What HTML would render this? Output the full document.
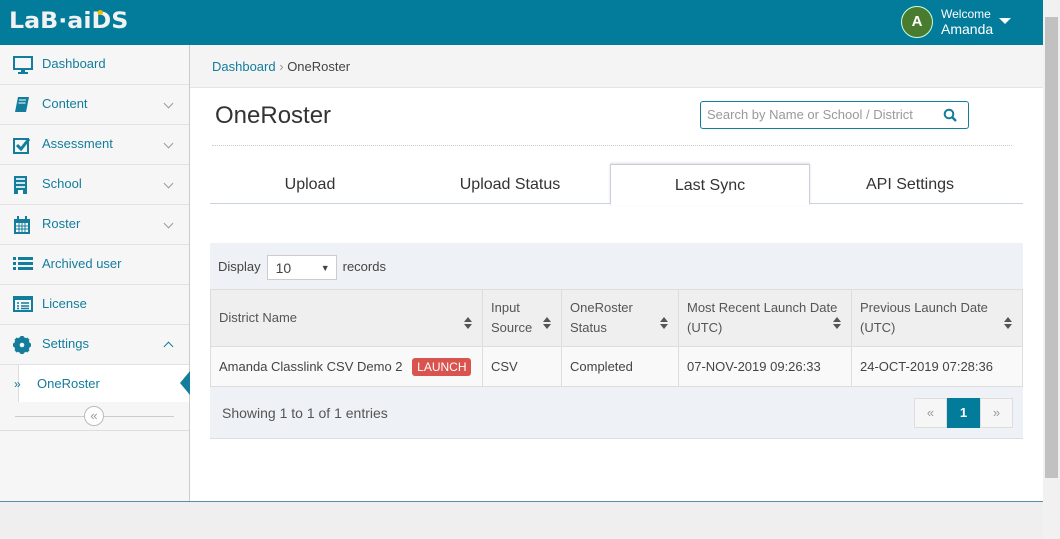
<!DOCTYPE html>
<html><head><style>
*{box-sizing:border-box;margin:0;padding:0}
body{width:1060px;height:539px;overflow:hidden;font-family:"Liberation Sans",sans-serif;background:#fff;position:relative;color:#555}
.hdr{position:absolute;left:0;top:0;width:1043px;height:45px;background:#037c9c}
.logo{position:absolute;left:9px;top:9px;color:#f2f2f2;font:900 22px "DejaVu Sans",sans-serif;letter-spacing:0px;transform:scaleX(1.08);transform-origin:left}
.logo i{position:absolute;left:82px;top:1px;width:5px;height:5px;border-radius:50%;background:#f5b800}
.av{position:absolute;left:901px;top:6px;width:32px;height:32px;border-radius:50%;background:#4a7c2f;border:1px solid #cfd;color:#fff;font:bold 15px "Liberation Sans";text-align:center;line-height:30px}
.wel{position:absolute;left:941px;top:7px;color:#fff;font-size:12px;line-height:15px}
.wel b{font-size:14px;font-weight:normal;display:block}
.caret{position:absolute;left:999px;top:18px;border:6px solid transparent;border-top:6px solid #fff}
.sb{position:absolute;left:0;top:45px;width:190px;height:456px;background:#f6f6f6;border-right:1px solid #ccc}
.it{height:40px;border-bottom:1px solid #e2e2e2;position:relative;color:#137d9c;font-size:13px;line-height:38px;padding-left:42px}
.it svg{position:absolute;left:13px;top:11px}
.it .ch{position:absolute;left:165px;top:15px;width:7px;height:7px;border-right:1.5px solid #999;border-bottom:1.5px solid #999;transform:rotate(45deg)}
.it .up{top:18px;transform:rotate(-135deg);border-color:#137d9c}
.sub{height:37px;background:#fff;position:relative;color:#137d9c;font-size:13px;line-height:37px;border-left:1px solid #ddd;margin-left:18px;padding-left:18px}
.sub:before{content:"»";position:absolute;left:-5px;top:1px;font-size:12px}
.sub:after{content:"";position:absolute;right:-1px;top:6px;border:12px solid transparent;border-right:10px solid #137d9c;border-left:0}
.col{height:29px;border-bottom:1px solid #ddd;position:relative}
.col:before{content:"";position:absolute;left:15px;right:15px;top:14px;border-top:1px solid #ccc}
.col span{position:absolute;left:84px;top:4px;width:20px;height:20px;border-radius:50%;border:1px solid #bbb;background:#fff;color:#999;font-size:13px;text-align:center;line-height:17px}
.bc{position:absolute;left:190px;top:45px;width:853px;height:43px;background:#f4f4f4;border-bottom:1px solid #e5e5e5;font-size:13px;line-height:44px;padding-left:22px;color:#444}
.bc a{color:#137d9c}
h1{position:absolute;left:215px;top:102px;font-weight:normal;font-size:24px;color:#333}
.srch{position:absolute;left:700px;top:101px;width:269px;height:28px;border:1px solid #137d9c;border-radius:3px;font-size:13px;color:#999;line-height:26px;padding-left:6px}
.dots{position:absolute;left:212px;top:145px;width:800px;border-top:1px dotted #ccc}
.tabs{position:absolute;left:210px;top:164px;width:813px;height:40px;border-bottom:1px solid #c8d3dd}
.tab{position:absolute;top:0;width:200px;height:40px;text-align:center;line-height:42px;font-size:16px;color:#333}
.tab.a{background:#fff;border:1px solid #ccd;border-bottom:1px solid #fff;box-shadow:0 -1px 2px #ddd;height:41px}
.panel{position:absolute;left:210px;top:243px;width:813px;height:196px;background:#eef1f5;border-bottom:1px solid #ddd}
.disp{position:absolute;left:8px;top:12px;font-size:13px;color:#444;line-height:24px}
.sel{display:inline-block;width:70px;height:25px;border:1px solid #ccc;background:#fff;vertical-align:middle;margin:0 6px;padding-left:8px;position:relative;font-size:14px}
.sel:after{content:"▼";position:absolute;right:6px;top:0;font-size:9px}
table{position:absolute;left:0;top:46px;width:813px;border-collapse:collapse;font-size:13px}
th{background:#efefef;font-weight:normal;text-align:left;color:#555;border:1px solid #ddd;height:57px;padding:0 8px;line-height:20px;position:relative;vertical-align:middle}
th:after{content:"";position:absolute;right:10px;top:27px;border:4.5px solid transparent;border-bottom:5px solid #555;border-top:0;}
th:before{content:"";position:absolute;right:10px;top:34px;border:4.5px solid transparent;border-top:5px solid #555;border-bottom:0}
td{background:#f9f9f9;border:1px solid #ddd;height:40px;padding:0 8px;color:#444}
.lb{display:inline-block;background:#d9534f;color:#fff;font-size:12px;padding:2px 5px;border-radius:3px;margin-left:6px}
.show{position:absolute;left:12px;top:162px;font-size:14px;color:#555}
.pg{position:absolute;left:704px;top:155px;display:flex}
.pg div{width:33px;height:30px;border:1px solid #ddd;background:#f6f6f6;text-align:center;line-height:28px;color:#999;font-size:13px}
.pg .c{background:#037c9c;color:#fff;border-color:#037c9c;font-weight:bold}
.foot{position:absolute;left:0;top:501px;width:1043px;height:38px;background:#efefef;border-top:1px solid #5b8fa5}
.scr{position:absolute;left:1043px;top:0;width:17px;height:539px;background:#f1f1f1}
.scr i{position:absolute;left:2px;top:17px;width:13px;height:461px;background:#c1c1c1}
</style></head><body>
<div class="hdr"><div class="logo">LaB·aiDS<i></i></div>
<div class="av">A</div><div class="wel">Welcome<b>Amanda</b></div><div class="caret"></div></div>
<div class="sb">
<div class="it"><svg width="20" height="18" viewBox="0 0 20 18"><rect x="1" y="1" width="18" height="12" fill="none" stroke="#137d9c" stroke-width="2"/><rect x="8" y="13" width="4" height="3" fill="#137d9c"/><rect x="5" y="16" width="10" height="2" fill="#137d9c"/></svg>Dashboard</div>
<div class="it"><svg width="18" height="18" viewBox="0 0 18 18"><path d="M5 1h11l-3 15H2z" fill="#137d9c"/><path d="M6 4h7M5.5 7h7" stroke="#fff"/></svg>Content<i class="ch"></i></div>
<div class="it"><svg width="18" height="18" viewBox="0 0 18 18"><rect x="1" y="3" width="14" height="14" fill="none" stroke="#137d9c" stroke-width="2"/><path d="M4 9l4 4 8-10" fill="none" stroke="#137d9c" stroke-width="3"/></svg>Assessment<i class="ch"></i></div>
<div class="it"><svg width="16" height="18" viewBox="0 0 16 18"><rect x="1" y="0" width="13" height="18" fill="#137d9c"/><path d="M3 2h9v2H3zM3 6h9v2H3zM3 10h9v2H3z" fill="#cfe5ee"/><rect x="5" y="14" width="5" height="4" fill="#fff"/></svg>School<i class="ch"></i></div>
<div class="it"><svg width="18" height="18" viewBox="0 0 18 18"><rect x="1" y="3" width="16" height="15" fill="#137d9c"/><path d="M3 7h12v9H3z" fill="#fff"/><path d="M6 7v9M9 7v9M12 7v9M3 10h12M3 13h12" stroke="#137d9c"/><rect x="4" y="0" width="2" height="5" fill="#137d9c"/><rect x="12" y="0" width="2" height="5" fill="#137d9c"/></svg>Roster<i class="ch"></i></div>
<div class="it"><svg width="20" height="16" viewBox="0 0 20 16"><path d="M0 1h3v3H0zM5 1h15v3H5zM0 6h3v3H0zM5 6h15v3H5zM0 11h3v3H0zM5 11h15v3H5z" fill="#137d9c"/></svg>Archived user</div>
<div class="it"><svg width="20" height="16" viewBox="0 0 20 16"><rect x="1" y="1" width="18" height="14" fill="none" stroke="#137d9c" stroke-width="2"/><path d="M1 1h18v3H1z" fill="#137d9c"/><path d="M4 7h2M8 7h8M4 10h2M8 10h8M4 12.5h2M8 12.5h8" stroke="#137d9c" stroke-width="1.4"/></svg>License</div>
<div class="it"><svg width="18" height="18" viewBox="0 0 18 18"><circle cx="9" cy="9" r="6" fill="none" stroke="#137d9c" stroke-width="4"/><path d="M9 0v18M0 9h18M2.6 2.6l12.8 12.8M15.4 2.6L2.6 15.4" stroke="#137d9c" stroke-width="3.5"/><circle cx="9" cy="9" r="2.3" fill="#f6f6f6"/></svg>Settings<i class="ch up"></i></div>
<div class="sub">OneRoster</div>
<div class="col"><span>«</span></div>
</div>
<div class="bc"><a>Dashboard</a> <span style="color:#999">›</span> OneRoster</div>
<h1>OneRoster</h1>
<div class="srch">Search by Name or School / District<svg style="position:absolute;right:11px;top:6px" width="14" height="14" viewBox="0 0 14 14"><circle cx="6" cy="6" r="4.3" fill="none" stroke="#137d9c" stroke-width="2"/><path d="M9 9l4 4" stroke="#137d9c" stroke-width="2.4"/></svg></div>
<div class="dots"></div>
<div class="tabs"><div class="tab" style="left:0">Upload</div><div class="tab" style="left:200px">Upload Status</div><div class="tab a" style="left:400px">Last Sync</div><div class="tab" style="left:600px">API Settings</div></div>
<div class="panel">
<div class="disp">Display<span class="sel">10</span>records</div>
<table><tr><th style="width:272px">District Name</th><th style="width:79px">Input<br>Source</th><th style="width:117px">OneRoster<br>Status</th><th style="width:173px">Most Recent Launch Date<br>(UTC)</th><th>Previous Launch Date<br>(UTC)</th></tr>
<tr><td>Amanda Classlink CSV Demo 2 <span class="lb">LAUNCH</span></td><td>CSV</td><td>Completed</td><td>07-NOV-2019 09:26:33</td><td>24-OCT-2019 07:28:36</td></tr></table>
<div class="show">Showing 1 to 1 of 1 entries</div>
<div class="pg"><div>«</div><div class="c">1</div><div>»</div></div>
</div>
<div class="foot"></div>
<div class="scr"><i></i></div>
</body></html>
